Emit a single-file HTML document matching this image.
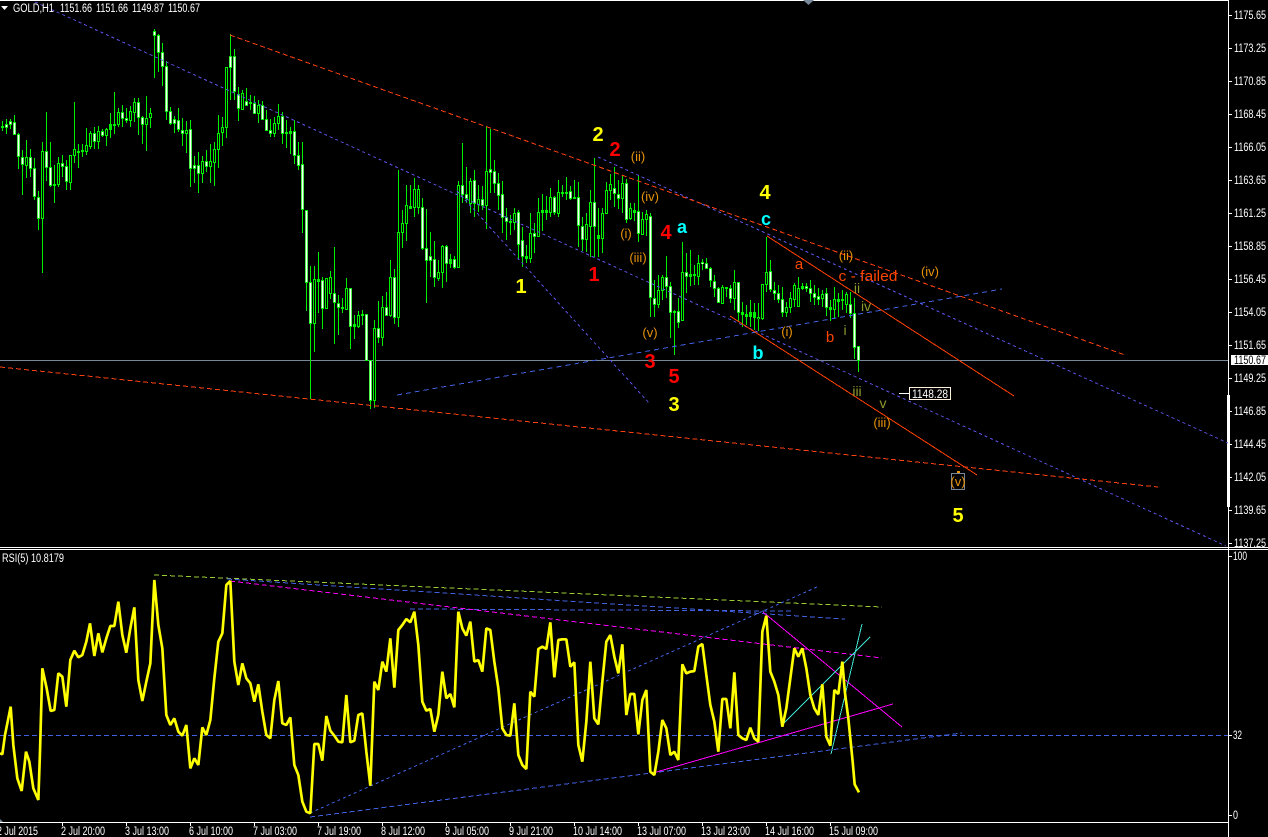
<!DOCTYPE html>
<html><head><meta charset="utf-8"><title>GOLD,H1</title>
<style>html,body{margin:0;padding:0;background:#000;width:1268px;height:837px;overflow:hidden}
svg{display:block;font-family:"Liberation Sans",sans-serif}
.a{fill:#fff;font-size:11.500px}
.y{fill:#ffff00;font-size:20px;font-weight:bold;text-anchor:middle}
.r{fill:#ff0000;font-size:20px;font-weight:bold;text-anchor:middle}
.c{fill:#00ffff;font-size:18px;font-weight:bold;text-anchor:middle}
.o{fill:#e8920a;font-size:13px;text-anchor:middle}
.e{fill:#ff4500;font-size:15px;text-anchor:middle}
.g{fill:#8f9a2c;font-size:14px;text-anchor:middle}
</style></head><body>
<svg width="1268" height="837" viewBox="0 0 1268 837" xmlns="http://www.w3.org/2000/svg">
<rect width="1268" height="837" fill="#000"/>
<g shape-rendering="crispEdges" fill="none">
<path d="M0 .5H1228M0 547.5H1268M0 549.5H1268M1228.5 0V837M0 822.5H1228" stroke="#fff"/>
<path d="M0 360.5H1228" stroke="#778899"/>
<path d="M1228.5 395V507" stroke="#fff" stroke-width="3"/>
<path d="M1228 15.5h4M1228 48.5h4M1228 81.5h4M1228 114.5h4M1228 147.5h4M1228 180.5h4M1228 213.5h4M1228 246.5h4M1228 279.5h4M1228 312.5h4M1228 345.5h4M1228 378.5h4M1228 411.5h4M1228 444.5h4M1228 477.5h4M1228 510.5h4M1228 543.5h4M1228 556.5h4M1228 735.5h4M1228 815.5h4M62.5 822v4M126.5 822v4M190.5 822v4M254.5 822v4M318.5 822v4M382.5 822v4M446.5 822v4M510.5 822v4M574.5 822v4M638.5 822v4M702.5 822v4M766.5 822v4M830.5 822v4" stroke="#fff"/>
<!-- wicks -->
<path stroke="#00ee00" d="M2.5 121V131M6.5 119V134M10.5 119V129M14.5 115V135M18.5 133V169M22.5 150V195M26.5 140V178M30.5 149V177M34.5 158V200M38.5 191V230M42.5 142V273M46.5 112V181M50.5 142V187M54.5 165V203M58.5 157V187M62.5 155V177M66.5 160V190M70.5 155V190M74.5 102V163M78.5 144V168M82.5 144V157M86.5 128V155M90.5 131V149M94.5 127V149M98.5 126V149M102.5 129V137M106.5 128V146M110.5 113V138M114.5 92V134M118.5 108V127M122.5 105V127M126.5 108V123M130.5 106V127M134.5 98V122M138.5 98V135M142.5 116V144M146.5 96V151M150.5 108V128M154.5 29V78M158.5 34V72M162.5 43V86M166.5 61V120M170.5 107V125M174.5 116V133M178.5 108V132M182.5 118V146M186.5 121V153M190.5 120V187M194.5 156V183M198.5 152V193M202.5 156V183M206.5 150V172M210.5 144V183M214.5 142V186M218.5 115V168M222.5 117V146M226.5 67V138M230.5 34V100M234.5 49V100M238.5 87V121M242.5 90V105M246.5 88V105M250.5 95V110M254.5 96V113M258.5 100V123M262.5 101V120M266.5 110V131M270.5 119V137M274.5 117V137M278.5 104V130M282.5 112V144M286.5 120V148M290.5 127V154M294.5 120V164M298.5 142V170M302.5 142V233M306.5 210V311M310.5 266V399M314.5 266V352M318.5 252V313M322.5 277V329M326.5 278V309M330.5 271V299M334.5 247V344M338.5 295V335M342.5 298V313M346.5 278V309M350.5 288V349M354.5 315V339M358.5 311V328M362.5 310V325M366.5 314V361M370.5 360V409M374.5 320V408M378.5 301V343M382.5 296V346M386.5 292V316M390.5 260V317M394.5 269V324M398.5 170V327M402.5 210V248M406.5 185V241M410.5 185V209M414.5 178V217M418.5 185V214M422.5 198V250M426.5 209V303M430.5 232V277M434.5 241V287M438.5 260V281M442.5 245V288M446.5 245V282M450.5 254V268M454.5 256V269M458.5 181V267M462.5 143V203M466.5 167V203M470.5 178V213M474.5 170V217M478.5 185V212M482.5 186V210M486.5 126V229M490.5 129V193M494.5 160V193M498.5 173V210M502.5 181V233M506.5 208V240M510.5 215V235M514.5 208V230M518.5 210V260M522.5 227V267M526.5 245V263M530.5 213V263M534.5 223V253M538.5 198V237M542.5 194V231M546.5 196V220M550.5 188V217M554.5 196V215M558.5 180V217M562.5 185V197M566.5 177V200M570.5 186V200M574.5 180V198M578.5 182V247M582.5 217V251M586.5 213V252M590.5 190V257M594.5 158V257M598.5 208V257M602.5 208V253M606.5 182V213M610.5 174V200M614.5 167V207M618.5 180V209M622.5 175V213M626.5 179V223M630.5 203V220M634.5 203V221M638.5 175V242M642.5 212V235M646.5 210V236M650.5 213V317M654.5 280V317M658.5 275V308M662.5 275V300M666.5 256V298M670.5 282V338M674.5 310V355M678.5 298V328M682.5 242V321M686.5 253V293M690.5 250V286M694.5 265V285M698.5 255V285M702.5 259V270M706.5 258V268M710.5 267V287M714.5 275V297M718.5 287V303M722.5 285V303M726.5 287V297M730.5 285V303M734.5 270V310M738.5 282V322M742.5 302V327M746.5 305V325M750.5 300V327M754.5 303V330M758.5 303V331M762.5 285V320M766.5 237V292M770.5 260V292M774.5 282V300M778.5 285V303M782.5 287V317M786.5 302V317M790.5 292V313M794.5 283V307M798.5 277V307M802.5 283V290M806.5 283V292M810.5 280V302M814.5 285V305M818.5 288V305M822.5 290V307M826.5 288V316M830.5 300V321M834.5 287V318M838.5 293V317M842.5 290V310M846.5 292V313M850.5 292V318M854.5 298V359M858.5 346V372"/>
<!-- bodies -->
<path stroke="#00ee00" stroke-width="3" d="M2.5 126V128M6.5 124V128M10.5 121V125M14.5 122V135M18.5 134V157M22.5 157V165M26.5 157V166M30.5 157V169M34.5 168V197M38.5 197V219M42.5 151V219M46.5 151V168M50.5 167V186M54.5 184V186M58.5 163V185M62.5 163V167M66.5 166V182M70.5 155V183M74.5 149V156M78.5 151V153M82.5 150V152M86.5 145V152M90.5 133V147M94.5 133V142M98.5 131V142M102.5 131V136M106.5 129V136M110.5 124V130M114.5 124V126M118.5 112V125M122.5 112V119M126.5 118V121M130.5 111V121M134.5 102V113M138.5 102V118M142.5 117V125M146.5 118V125M150.5 113V118M154.5 31V36M158.5 35V53M162.5 52V67M166.5 66V112M170.5 111V124M174.5 119V124M178.5 120V130M182.5 130V134M186.5 130V134M190.5 129V169M194.5 165V169M198.5 165V174M202.5 161V174M206.5 161V167M210.5 161V167M214.5 149V163M218.5 133V150M222.5 127V133M226.5 67V128M230.5 56V68M234.5 56V92M238.5 94V109M242.5 93V110M246.5 101V106M250.5 102V104M254.5 103V114M258.5 105V114M262.5 105V120M266.5 119V131M270.5 130V134M274.5 123V134M278.5 116V124M282.5 116V134M286.5 132V134M290.5 131V134M294.5 131V156M298.5 155V166M302.5 164V210M306.5 210V283M310.5 282V324M314.5 279V324M318.5 279V282M322.5 280V309M326.5 278V309M330.5 277V294M334.5 293V303M338.5 303V308M342.5 307V309M346.5 288V310M350.5 288V327M354.5 324V327M358.5 315V327M362.5 314V316M366.5 314V361M370.5 360V401M374.5 328V401M378.5 328V338M382.5 307V338M386.5 307V316M390.5 277V316M394.5 277V318M398.5 232V318M402.5 223V233M406.5 205V224M410.5 206V209M414.5 189V208M418.5 189V208M422.5 207V249M426.5 248V261M430.5 256V261M434.5 259V278M438.5 272V279M442.5 246V273M446.5 246V264M450.5 259V264M454.5 259V268M458.5 185V268M462.5 185V195M466.5 194V199M470.5 181V204M474.5 180V204M478.5 199V205M482.5 199V206M486.5 171V206M490.5 169V173M494.5 171V184M498.5 183V196M502.5 194V218M506.5 217V222M510.5 221V223M514.5 213V223M518.5 212V245M522.5 240V257M526.5 256V259M530.5 233V259M534.5 233V237M538.5 212V237M542.5 210V213M546.5 210V213M550.5 197V213M554.5 197V213M558.5 192V214M562.5 192V194M566.5 192V194M570.5 191V199M574.5 197V199M578.5 197V226M582.5 226V240M586.5 224V240M590.5 202V227M594.5 202V227M598.5 235V239M602.5 213V239M606.5 190V214M610.5 184V191M614.5 188V194M618.5 194V199M622.5 183V199M626.5 183V220M630.5 208V219M634.5 210V213M638.5 211V234M642.5 219V235M646.5 214V220M650.5 216V298M654.5 298V305M658.5 290V305M662.5 277V291M666.5 277V287M670.5 286V313M674.5 311V313M678.5 311V323M682.5 272V321M686.5 272V277M690.5 274V277M694.5 274V276M698.5 263V277M702.5 262V264M706.5 263V269M710.5 268V281M714.5 281V289M718.5 288V303M722.5 287V304M726.5 287V289M730.5 288V299M734.5 282V299M738.5 282V313M742.5 312V315M746.5 314V317M750.5 312V317M754.5 312V318M758.5 317V319M762.5 284V319M766.5 272V285M770.5 271V290M774.5 290V294M778.5 293V300M782.5 299V313M786.5 307V313M790.5 298V308M794.5 285V300M798.5 288V307M802.5 286V289M806.5 286V289M810.5 288V294M814.5 293V298M818.5 296V300M822.5 294V299M826.5 293V308M830.5 307V310M834.5 299V310M838.5 299V302M842.5 299V301M846.5 294V305M850.5 304V314M854.5 313V348M858.5 346V361"/>
<!-- white centres -->
<path stroke="#fff" stroke-width="1.600" shape-rendering="auto" d="M6.5 125V127M10.5 122V124M14.5 123V134M18.5 135V156M22.5 158V164M30.5 158V168M34.5 169V196M38.5 198V218M46.5 152V167M50.5 168V185M62.5 164V166M66.5 167V181M94.5 134V141M102.5 132V135M122.5 113V118M126.5 119V120M138.5 103V117M142.5 118V124M154.5 32V35M158.5 36V52M162.5 53V66M166.5 67V111M170.5 112V123M174.5 120V123M178.5 121V129M182.5 131V133M190.5 130V168M194.5 166V168M198.5 166V173M206.5 162V166M230.5 57V67M234.5 57V91M238.5 95V108M246.5 102V105M254.5 104V113M262.5 106V119M266.5 120V130M270.5 131V133M282.5 117V133M294.5 132V155M298.5 156V165M302.5 165V209M306.5 211V282M310.5 283V323M322.5 281V308M334.5 294V302M338.5 304V307M350.5 289V326M366.5 315V360M370.5 361V400M378.5 329V337M386.5 308V315M394.5 278V317M422.5 208V248M426.5 249V260M430.5 257V260M434.5 260V277M446.5 247V263M454.5 260V267M462.5 186V194M466.5 195V198M474.5 181V203M482.5 200V205M490.5 170V172M494.5 172V183M498.5 184V195M502.5 195V217M506.5 218V221M518.5 213V244M522.5 241V256M534.5 234V236M554.5 198V212M570.5 192V198M578.5 198V225M582.5 227V239M594.5 203V226M614.5 189V193M618.5 195V198M626.5 184V219M638.5 212V233M650.5 217V297M654.5 299V304M666.5 278V286M670.5 287V312M678.5 312V322M686.5 273V276M702.5 263V264M706.5 264V268M710.5 269V280M714.5 282V288M718.5 289V302M730.5 289V298M738.5 283V312M770.5 272V289M774.5 291V293M778.5 294V299M782.5 300V312M806.5 287V288M810.5 289V293M814.5 294V297M818.5 297V299M826.5 294V307M850.5 305V313M854.5 314V347M858.5 347V360"/>
<!-- black centres -->
<path stroke="#000" d="M26.5 158V165M42.5 152V218M58.5 164V184M70.5 156V182M74.5 150V155M86.5 146V151M90.5 134V146M98.5 132V141M106.5 130V135M118.5 113V124M130.5 112V120M134.5 103V112M146.5 119V124M150.5 114V117M186.5 131V133M202.5 162V173M210.5 162V166M214.5 150V162M218.5 134V149M222.5 128V132M226.5 68V127M242.5 94V109M258.5 106V113M274.5 124V133M278.5 117V123M314.5 280V323M326.5 279V308M330.5 278V293M346.5 289V309M358.5 316V326M374.5 329V400M382.5 308V337M390.5 278V315M398.5 233V317M402.5 224V232M406.5 206V223M414.5 190V207M418.5 190V207M438.5 273V278M442.5 247V272M458.5 186V267M470.5 182V203M478.5 200V204M486.5 172V205M514.5 214V222M530.5 234V258M538.5 213V236M550.5 198V212M558.5 193V213M586.5 225V239M590.5 203V226M602.5 214V238M606.5 191V213M610.5 185V190M622.5 184V198M630.5 209V218M642.5 220V234M646.5 215V219M658.5 291V304M662.5 278V290M682.5 273V320M698.5 264V276M722.5 288V303M734.5 283V298M758.5 318V319M762.5 285V318M766.5 273V284M786.5 308V312M790.5 299V307M794.5 286V299M798.5 289V306M822.5 295V298M834.5 300V309M846.5 295V304"/>
<!-- main trend lines -->
<g stroke="#5a50e0" stroke-dasharray="3 3">
<path d="M35 2L1226 546M598 157L1228 443M457 191L650 404"/>
</g>
<path d="M397 395L1002 289" stroke="#4060e0" stroke-dasharray="5 4"/>
<path d="M230 35L1125 355M0 367L1158 487" stroke="#ff4010" stroke-dasharray="5 3"/>
<path d="M767 236L1014 396M730 316L977 475" stroke="#ff4000"/>
<!-- RSI -->
<path d="M0 735.5H1228" stroke="#4060e0" stroke-dasharray="5 3"/>
<path d="M154 575L882 607" stroke="#9acd32" stroke-dasharray="5 3"/>
<path d="M227 579L845 619M410 609L792 611M310 817L962 733" stroke="#4060e0" stroke-dasharray="5 3"/>
<path d="M310 813L817 587" stroke="#4060e0" stroke-dasharray="3 3"/>
<path d="M230 581L882 658" stroke="#ff00ff" stroke-dasharray="5 3"/>
<path d="M653 773L893 704" stroke="#ff00ff"/>
<path d="M763 612L902 727" stroke="#ff00ff"/>
<path d="M782 725L870 637M831 754L862 624" stroke="#40e0d0"/>
</g>
<g fill="none">
<g stroke="#ffff00" stroke-width="8" stroke-linejoin="bevel">
<path transform="translate(0 545) scale(.33333)" d="M0 625L7 628L15 570L32 485L40 600L52 700L65 738L78 620L88 650L100 730L115 765L120 620L127 370L140 430L152 498L163 495L175 385L187 395L199 485L211 345L223 317L235 337L247 330L259 290L270 235L283 333L295 265L307 322L319 280L331 243L343 243L355 170L367 270L379 323L391 250L403 187L415 405L427 468L439 410L451 355L463 105L475 240L487 310L499 510L511 540L523 520L535 560L547 572L559 540L571 670L583 640L595 660L607 547L619 570L631 525L643 400L655 290L667 265L679 120L691 108L703 350L715 420L727 355L739 400L751 415L763 470L775 418L787 500L799 570L811 580L823 465L835 408L847 535L859 540L871 517L883 660L895 690L907 770L919 800L931 805L943 597L955 597L967 647L979 513L991 557L1003 572L1015 590L1027 592L1039 450L1051 592L1063 587L1075 510L1087 505L1099 620L1111 722L1123 410L1135 435L1147 350L1159 380L1171 280L1183 428L1195 255L1207 240L1219 222L1231 232L1243 200L1255 300L1267 470L1279 497L1291 492L1303 560L1315 510"/>
<path transform="translate(430 545) scale(.33333)" d="M25 510L37 380L49 460L61 447L73 487L85 200L97 250L109 272L121 230L133 350L145 345L157 380L169 250L181 255L193 350L205 430L217 550L229 570L241 572L253 475L265 630L277 660L289 672L301 440L313 455L325 312L337 305L349 312L361 232L373 397L385 285L397 283L409 283L421 365L433 352L445 600L457 650L469 530L481 350L493 520L505 538L517 410L529 290L541 270L553 335L565 385L577 298L589 510L601 447L613 447L625 568L637 465L649 435L661 680L673 690L685 620L697 525L709 550L721 630L733 620L745 645L757 358L769 385L781 380L793 378L805 305L817 297L829 390L841 480L853 530L865 620L877 462L889 462L901 550L913 382L925 570L937 580L949 585L961 548L973 580L985 590L997 260L1009 212L1021 380L1033 410L1045 450L1057 545L1069 490L1081 400L1093 310L1105 335L1117 310L1129 370L1141 450L1153 490L1165 510L1177 418L1189 575L1201 602L1213 435L1225 447L1237 350L1245 445L1255 520L1262 590L1268 650L1274 718L1287 742"/>
</g>
</g>
<!-- header -->
<path d="M1 6h7l-3.500 4z" fill="#fff"/>
<path d="M803 0h11l-5.500 5z" fill="#778899"/>
<path d="M0 819l3 3h-3z" fill="#778899"/>
<g class="a">
<text class="a" x="13" y="12" textLength="41" lengthAdjust="spacingAndGlyphs">GOLD,H1</text>
<text class="a" x="60" y="12" textLength="32" lengthAdjust="spacingAndGlyphs">1151.66</text>
<text class="a" x="96" y="12" textLength="32" lengthAdjust="spacingAndGlyphs">1151.66</text>
<text class="a" x="132" y="12" textLength="32" lengthAdjust="spacingAndGlyphs">1149.87</text>
<text class="a" x="168" y="12" textLength="32" lengthAdjust="spacingAndGlyphs">1150.67</text>
<text class="a" x="2" y="562" textLength="62" lengthAdjust="spacingAndGlyphs">RSI(5) 10.8179</text>
<text class="a" x="1234" y="19" textLength="32" lengthAdjust="spacingAndGlyphs">1175.65</text>
<text class="a" x="1234" y="52" textLength="32" lengthAdjust="spacingAndGlyphs">1173.25</text>
<text class="a" x="1234" y="85" textLength="32" lengthAdjust="spacingAndGlyphs">1170.85</text>
<text class="a" x="1234" y="118" textLength="32" lengthAdjust="spacingAndGlyphs">1168.45</text>
<text class="a" x="1234" y="151" textLength="32" lengthAdjust="spacingAndGlyphs">1166.05</text>
<text class="a" x="1234" y="184" textLength="32" lengthAdjust="spacingAndGlyphs">1163.65</text>
<text class="a" x="1234" y="217" textLength="32" lengthAdjust="spacingAndGlyphs">1161.25</text>
<text class="a" x="1234" y="250" textLength="32" lengthAdjust="spacingAndGlyphs">1158.85</text>
<text class="a" x="1234" y="283" textLength="32" lengthAdjust="spacingAndGlyphs">1156.45</text>
<text class="a" x="1234" y="316" textLength="32" lengthAdjust="spacingAndGlyphs">1154.05</text>
<text class="a" x="1234" y="349" textLength="32" lengthAdjust="spacingAndGlyphs">1151.65</text>
<text class="a" x="1234" y="382" textLength="32" lengthAdjust="spacingAndGlyphs">1149.25</text>
<text class="a" x="1234" y="415" textLength="32" lengthAdjust="spacingAndGlyphs">1146.85</text>
<text class="a" x="1234" y="448" textLength="32" lengthAdjust="spacingAndGlyphs">1144.45</text>
<text class="a" x="1234" y="481" textLength="32" lengthAdjust="spacingAndGlyphs">1142.05</text>
<text class="a" x="1234" y="514" textLength="32" lengthAdjust="spacingAndGlyphs">1139.65</text>
<text class="a" x="1234" y="547" textLength="32" lengthAdjust="spacingAndGlyphs">1137.25</text>
<text class="a" x="1233" y="560" textLength="14" lengthAdjust="spacingAndGlyphs">100</text>
<text class="a" x="1233" y="739" textLength="9" lengthAdjust="spacingAndGlyphs">32</text>
<text class="a" x="1233" y="819" textLength="5" lengthAdjust="spacingAndGlyphs">0</text>
<text class="a" x="-3" y="835" textLength="41" lengthAdjust="spacingAndGlyphs">2 Jul 2015</text>
<text class="a" x="61" y="835" textLength="44" lengthAdjust="spacingAndGlyphs">2 Jul 20:00</text>
<text class="a" x="125" y="835" textLength="44" lengthAdjust="spacingAndGlyphs">3 Jul 13:00</text>
<text class="a" x="189" y="835" textLength="44" lengthAdjust="spacingAndGlyphs">6 Jul 10:00</text>
<text class="a" x="253" y="835" textLength="44" lengthAdjust="spacingAndGlyphs">7 Jul 03:00</text>
<text class="a" x="317" y="835" textLength="44" lengthAdjust="spacingAndGlyphs">7 Jul 19:00</text>
<text class="a" x="381" y="835" textLength="44" lengthAdjust="spacingAndGlyphs">8 Jul 12:00</text>
<text class="a" x="445" y="835" textLength="44" lengthAdjust="spacingAndGlyphs">9 Jul 05:00</text>
<text class="a" x="509" y="835" textLength="44" lengthAdjust="spacingAndGlyphs">9 Jul 21:00</text>
<text class="a" x="573" y="835" textLength="49" lengthAdjust="spacingAndGlyphs">10 Jul 14:00</text>
<text class="a" x="637" y="835" textLength="49" lengthAdjust="spacingAndGlyphs">13 Jul 07:00</text>
<text class="a" x="701" y="835" textLength="49" lengthAdjust="spacingAndGlyphs">13 Jul 23:00</text>
<text class="a" x="765" y="835" textLength="49" lengthAdjust="spacingAndGlyphs">14 Jul 16:00</text>
<text class="a" x="829" y="835" textLength="49" lengthAdjust="spacingAndGlyphs">15 Jul 09:00</text>
</g>
<rect x="1231" y="355" width="37" height="10" fill="#fff"/>
<text x="1234" y="364" fill="#000" font-size="11.500" textLength="32" lengthAdjust="spacingAndGlyphs">1150.67</text>
<!-- wave labels -->
<text class="y" x="598" y="141">2</text>
<text class="y" x="521" y="293">1</text>
<text class="y" x="674" y="411">3</text>
<text class="y" x="765" y="199">4</text>
<text class="y" x="958" y="522">5</text>
<text class="r" x="615" y="156">2</text>
<text class="r" x="594" y="281">1</text>
<text class="r" x="666" y="239">4</text>
<text class="r" x="650" y="368">3</text>
<text class="r" x="674" y="383">5</text>
<text class="c" x="682" y="233">a</text>
<text class="c" x="766" y="225">c</text>
<text class="c" x="758" y="359">b</text>
<text class="o" x="638" y="161">(ii)</text>
<text class="o" x="650" y="201">(iv)</text>
<text class="o" x="626" y="238">(i)</text>
<text class="o" x="638" y="262">(iii)</text>
<text class="o" x="650" y="337">(v)</text>
<text class="o" x="787" y="336">(i)</text>
<text class="o" x="846" y="260">(ii)</text>
<text class="o" x="930" y="276">(iv)</text>
<text class="o" x="882" y="427">(iii)</text>
<text class="e" x="799" y="269">a</text>
<text class="e" x="830" y="342">b</text>
<text class="e" x="868" y="281" font-size="17" textLength="59" lengthAdjust="spacingAndGlyphs">c - failed</text>
<text class="g" x="857" y="293">ii</text>
<text class="g" x="866" y="311">iv</text>
<text class="g" x="845" y="335">i</text>
<text class="g" x="857" y="396">iii</text>
<text class="g" x="883" y="408">v</text>
<rect x="951.500" y="473.500" width="13" height="16" fill="none" stroke="#778899" shape-rendering="crispEdges"/>
<rect x="957" y="471" width="3" height="2" fill="#e8920a"/>
<text class="o" x="958" y="486">(v)</text>
<path d="M899 393.500h10" stroke="#fff" shape-rendering="crispEdges"/>
<rect x="909.500" y="387.500" width="41" height="12" fill="#000" stroke="#fff2dc" shape-rendering="crispEdges"/>
<text x="912" y="398" fill="#fff" font-size="11.500" textLength="36" lengthAdjust="spacingAndGlyphs">1148.28</text>
</svg>
</body></html>
